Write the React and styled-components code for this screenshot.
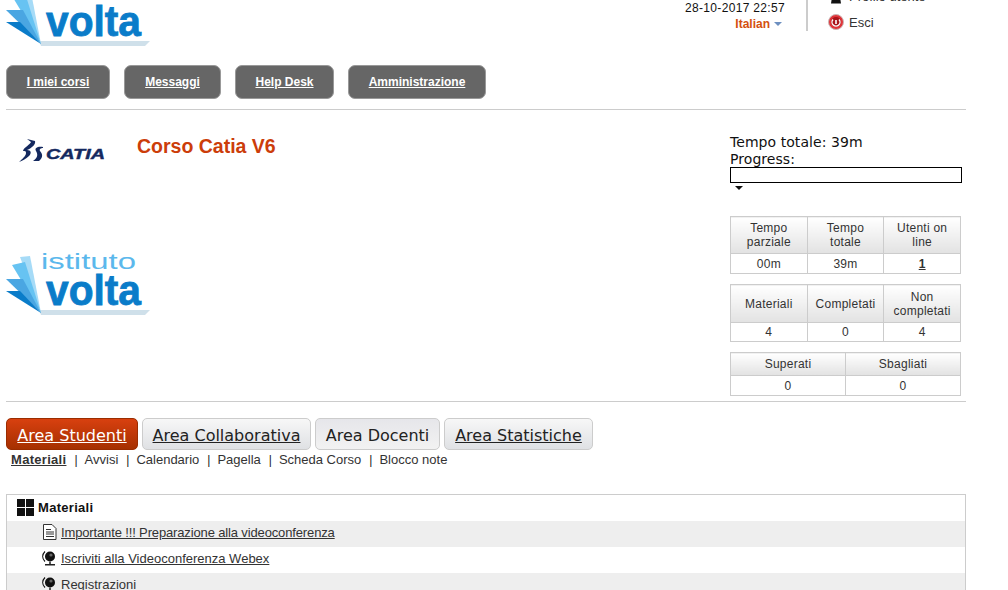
import React from "react";
import styled, { createGlobalStyle } from "styled-components";

const GlobalStyle = createGlobalStyle`
  html, body {
    margin: 0;
    height: 590px;
    overflow: hidden;
    background: #fff;
    font-family: "Liberation Sans", Arial, sans-serif;
  }
`;

const Page = styled.div`
  width: 960px;
  padding-left: 6px;
`;

// header, the page is scrolled so its top part is cut off
const Header = styled.header`
  height: 48px;
  overflow: hidden;
  display: flex;
  align-items: flex-end;
  justify-content: space-between;
`;

const TopRight = styled.div`
  display: flex;
  align-self: flex-start;
  height: 31px;
`;

const DateBox = styled.div`
  width: 100px;
  padding-top: 1px;
  text-align: right;
  white-space: nowrap;
  font-size: 12px;
  line-height: 14px;
  color: #111;
  letter-spacing: 0.33px;
`;

const Lang = styled.div`
  margin-top: 2px;
  padding-right: 3px;
  font-weight: bold;
  color: #d4500f;
  letter-spacing: 0;
  display: flex;
  justify-content: flex-end;
  align-items: center;
  gap: 4px;
`;

const Caret = styled.span`
  width: 0;
  height: 0;
  border-left: 4px solid transparent;
  border-right: 4px solid transparent;
  border-top: 4px solid ${(p) => p.$color};
`;

const UserLinks = styled.div`
  width: 138px;
  margin-left: 21px;
  padding-left: 20px;
  border-left: 2px solid #ccc;
  color: #333;
  font-size: 13px;
`;

const UserLink = styled.div`
  display: flex;
  align-items: center;
  gap: 5px;
  height: 16px;
  margin-top: ${(p) => p.$top}px;
`;

const NavBar = styled.nav`
  display: flex;
  gap: 14px;
  margin-top: 17px;
  padding-bottom: 10px;
  border-bottom: 1px solid #ccc;
`;

const NavButton = styled.a`
  box-sizing: border-box;
  height: 34px;
  width: ${(p) => p.$width}px;
  display: flex;
  align-items: center;
  justify-content: center;
  background: #666;
  border: 1px solid #999;
  border-radius: 7px;
  color: #fff;
  font-size: 12px;
  font-weight: bold;
  text-decoration: underline;
`;

const CourseSection = styled.section`
  display: flex;
  justify-content: space-between;
  height: 291px;
  border-bottom: 1px solid #ccc;
`;

const CourseLeft = styled.div`
  padding-top: 24px;
`;

const CourseHead = styled.div`
  display: flex;
  align-items: flex-start;
  gap: 31px;
  padding-left: 12px;
`;

const CourseTitle = styled.h1`
  margin: 0;
  font-size: 19.5px;
  line-height: 24px;
  color: #cc3d0a;
`;

const CourseLogoWrap = styled.div`
  margin-top: 89px;
`;

const Stats = styled.aside`
  width: 236px;
  padding-top: 24px;
`;

const Summary = styled.div`
  font-family: "DejaVu Sans", Verdana, sans-serif;
  font-size: 14px;
  line-height: 17px;
  color: #111;
  letter-spacing: 0.06px;
`;

const ProgressBar = styled.div`
  box-sizing: border-box;
  width: 232px;
  height: 16px;
  margin-top: -1px;
  border: 1px solid #000;
`;

const ProgressMark = styled.span`
  display: block;
  width: 0;
  height: 0;
  margin: 3px 0 26px 5px;
  border-left: 4px solid transparent;
  border-right: 4px solid transparent;
  border-top: 4px solid #111;
`;

const StatTable = styled.table`
  width: 231px;
  table-layout: fixed;
  border-collapse: collapse;
  margin-bottom: 10px;
  font-size: 12px;
  line-height: 14px;
  letter-spacing: 0.25px;
  color: #333;
  text-align: center;

  th, td {
    border: 1px solid #ccc;
    padding: 0;
    font-weight: normal;
  }

  th {
    height: ${(p) => p.$headHeight}px;
    background: linear-gradient(#fff, #e2e2e2);
  }

  td {
    height: ${(p) => p.$cellHeight}px;
  }
`;

const UserCount = styled.a`
  font-weight: bold;
  text-decoration: underline;
`;

const Tabs = styled.div`
  display: flex;
  gap: 4px;
  margin-top: 16px;
`;

const Tab = styled.a`
  box-sizing: border-box;
  width: ${(p) => p.$width}px;
  height: 32px;
  padding-top: 2px;
  display: flex;
  align-items: center;
  justify-content: center;
  border-radius: 5px;
  border: 1px solid ${(p) => (p.$active ? "#9a2c00" : "#ccc")};
  background: ${(p) =>
    p.$active
      ? "linear-gradient(#d8400f, #a53000)"
      : p.$flat
        ? "linear-gradient(#e6e6ea, #f2f2f2)"
        : "linear-gradient(#f7f7f7, #dfe1e4)"};
  color: ${(p) => (p.$active ? "#fff" : "#222")};
  font-family: "DejaVu Sans", Verdana, sans-serif;
  font-size: 16px;
  text-decoration: ${(p) => (p.$flat ? "none" : "underline")};
`;

const SubNav = styled.div`
  display: flex;
  align-items: center;
  margin-top: 2px;
  padding-left: 5px;
  font-size: 13px;
  line-height: 16px;
  color: #333;
`;

const SubLink = styled.a`
  font-weight: ${(p) => (p.$active ? "bold" : "normal")};
  letter-spacing: ${(p) => (p.$active ? "0.3px" : "0")};
  text-decoration: ${(p) => (p.$active ? "underline" : "none")};
`;

const Separator = styled.span`
  margin: 0 7px 0 8px;
  font-size: 12px;
  color: #222;
`;

const Panel = styled.section`
  margin-top: 26px;
  border: 1px solid #ccc;
  border-bottom: 0;
`;

const PanelTitle = styled.div`
  box-sizing: border-box;
  height: 26px;
  padding: 0 0 2px 10px;
  display: flex;
  align-items: center;
  gap: 4px;
  font-size: 13px;
  letter-spacing: 0.3px;
  font-weight: bold;
  color: #111;
`;

const MaterialRow = styled.div`
  box-sizing: border-box;
  height: 26px;
  padding: 0 0 4px 35px;
  display: flex;
  align-items: center;
  gap: 4px;
  font-size: 13px;
  color: #333;
  background: ${(p) => (p.$shaded ? "#eee" : "#fff")};
`;

const MaterialLink = styled.a`
  letter-spacing: ${(p) => (p.$tight ? "-0.14px" : "0")};
  text-decoration: ${(p) => (p.$plain ? "none" : "underline")};
`;

const IconBox = styled.svg`
  flex: none;
`;

const LogoSvg = styled.svg`
  display: block;
  flex: none;
`;

const Logo = () => (
  <LogoSvg width="146" height="66" viewBox="0 0 146 66">
    <polygon points="35,64 139,64 144,59 33,59" fill="#cfe0ea" />
    <polygon points="14,6 24,5 35,62" fill="#a6dbf7" />
    <polygon points="6,14 19,11 35,62" fill="#67c3f2" />
    <polygon points="0,28 17,28 35,62" fill="#4aa6e2" />
    <polygon points="0,40 14,40 35,62" fill="#0a7cc9" />
    <text
      x="35"
      y="18"
      fontFamily="Liberation Sans, sans-serif"
      fontSize="22"
      fill="#5bb8ec"
      textLength="95"
      lengthAdjust="spacingAndGlyphs"
    >
      istituto
    </text>
    <text
      x="40"
      y="54"
      fontFamily="Liberation Sans, sans-serif"
      fontSize="42"
      fontWeight="bold"
      fill="#0a7cc9"
      stroke="#0a7cc9"
      strokeWidth="0.8"
      textLength="95"
      lengthAdjust="spacingAndGlyphs"
    >
      volta
    </text>
  </LogoSvg>
);

const CatiaLogo = () => (
  <LogoSvg width="88" height="28" viewBox="0 0 88 28">
    <path
      d="M9 5 L17 7 C18 10 14 14 9 16 C13 16 14 19 11 22 C8 25 4 27 1 28 C4 25 8 22 8 19 C8 17 7 17 5 17 C6 13 12 11 13 8 Z"
      fill="#14295f"
    />
    <path d="M25 13 C20 12 16 14 18 17 C20 20 20 24 15 27 L21 27 C25 24 25 20 22 17 C21 15 23 14 25 14 Z" fill="#14295f" />
    <text
      x="28"
      y="25"
      fontFamily="Liberation Sans, sans-serif"
      fontSize="14"
      fontWeight="bold"
      fontStyle="italic"
      fill="#14295f"
      stroke="#14295f"
      strokeWidth="0.4"
      textLength="59"
      lengthAdjust="spacingAndGlyphs"
    >
      CATIA
    </text>
  </LogoSvg>
);

const PowerIcon = () => (
  <IconBox width="16" height="16" viewBox="0 0 16 16">
    <circle cx="8" cy="8" r="7.5" fill="#e0353a" stroke="#cbb5b5" />
    <circle cx="8" cy="8" r="5" fill="#a8141a" />
    <path d="M5 5.5 A4 4 0 1 0 11 5.5" fill="none" stroke="#fff" strokeWidth="1.4" />
    <rect x="7.2" y="6" width="1.6" height="4" fill="#fff" />
  </IconBox>
);

const UserIcon = () => (
  <IconBox width="16" height="16" viewBox="0 0 16 16">
    <circle cx="8" cy="4" r="3.5" fill="#111" />
    <path d="M3 15.5 L4 9 H12 L13 15.5 Z" fill="#111" />
  </IconBox>
);

const GridIcon = () => (
  <IconBox width="17" height="17" viewBox="0 0 17 17">
    <rect x="0" y="0" width="8" height="8" fill="#111" />
    <rect x="9" y="0" width="8" height="8" fill="#111" />
    <rect x="0" y="9" width="8" height="8" fill="#111" />
    <rect x="9" y="9" width="8" height="8" fill="#111" />
  </IconBox>
);

const DocIcon = () => (
  <IconBox width="15" height="16" viewBox="0 0 15 16">
    <path d="M1.5 .5 H10 L14 4.5 V15.5 H1.5 Z" fill="#fff" stroke="#333" />
    <path d="M4 5.5 H9 M4 8 H12 M4 10 H12 M4 12.5 H12" stroke="#333" />
  </IconBox>
);

const WebcamIcon = () => (
  <IconBox width="15" height="16" viewBox="0 0 15 16">
    <circle cx="8" cy="6.5" r="5" fill="#111" />
    <circle cx="9" cy="5" r="1.6" fill="#666" />
    <path d="M3 1.5 C0 4.5 0 8.5 3 11.5" fill="none" stroke="#111" strokeWidth="1.2" />
    <rect x="7" y="11.5" width="2" height="2.5" fill="#555" />
    <rect x="3" y="14" width="10" height="1.5" fill="#222" />
  </IconBox>
);

const navItems = [
  { label: "I miei corsi", width: 104 },
  { label: "Messaggi", width: 97 },
  { label: "Help Desk", width: 99 },
  { label: "Amministrazione", width: 138 },
];

const tabs = [
  { label: "Area Studenti", width: 132, active: true },
  { label: "Area Collaborativa", width: 169 },
  { label: "Area Docenti", width: 125, flat: true },
  { label: "Area Statistiche", width: 149 },
];

const subLinks = ["Avvisi", "Calendario", "Pagella", "Scheda Corso", "Blocco note"];

const App = () => {
  return (
    <>
      <GlobalStyle />
      <Page>
        <Header>
          <Logo />
          <TopRight>
            <DateBox>
              28-10-2017 22:57
              <Lang>
                Italian <Caret $color="#6d8fc0" />
              </Lang>
            </DateBox>
            <UserLinks>
              <UserLink $top={-12}>
                <UserIcon /> Profilo utente
              </UserLink>
              <UserLink $top={10}>
                <PowerIcon /> Esci
              </UserLink>
            </UserLinks>
          </TopRight>
        </Header>

        <NavBar>
          {navItems.map((item) => (
            <NavButton key={item.label} $width={item.width}>
              {item.label}
            </NavButton>
          ))}
        </NavBar>

        <CourseSection>
          <CourseLeft>
            <CourseHead>
              <CatiaLogo />
              <CourseTitle>Corso Catia V6</CourseTitle>
            </CourseHead>
            <CourseLogoWrap>
              <Logo />
            </CourseLogoWrap>
          </CourseLeft>

          <Stats>
            <Summary>
              Tempo totale: 39m
              <br />
              Progress:
            </Summary>
            <ProgressBar />
            <ProgressMark />

            <StatTable $headHeight={36} $cellHeight={19}>
              <thead>
                <tr>
                  <th>Tempo<br />parziale</th>
                  <th>Tempo<br />totale</th>
                  <th>Utenti on<br />line</th>
                </tr>
              </thead>
              <tbody>
                <tr>
                  <td>00m</td>
                  <td>39m</td>
                  <td>
                    <UserCount>1</UserCount>
                  </td>
                </tr>
              </tbody>
            </StatTable>

            <StatTable $headHeight={37} $cellHeight={18}>
              <thead>
                <tr>
                  <th>Materiali</th>
                  <th>Completati</th>
                  <th>Non<br />completati</th>
                </tr>
              </thead>
              <tbody>
                <tr>
                  <td>4</td>
                  <td>0</td>
                  <td>4</td>
                </tr>
              </tbody>
            </StatTable>

            <StatTable $headHeight={22} $cellHeight={19}>
              <thead>
                <tr>
                  <th>Superati</th>
                  <th>Sbagliati</th>
                </tr>
              </thead>
              <tbody>
                <tr>
                  <td>0</td>
                  <td>0</td>
                </tr>
              </tbody>
            </StatTable>
          </Stats>
        </CourseSection>

        <Tabs>
          {tabs.map((tab) => (
            <Tab key={tab.label} $width={tab.width} $active={tab.active} $flat={tab.flat}>
              {tab.label}
            </Tab>
          ))}
        </Tabs>

        <SubNav>
          <SubLink $active>Materiali</SubLink>
          {subLinks.map((label) => (
            <React.Fragment key={label}>
              <Separator>|</Separator>
              <SubLink>{label}</SubLink>
            </React.Fragment>
          ))}
        </SubNav>

        <Panel>
          <PanelTitle>
            <GridIcon /> Materiali
          </PanelTitle>
          <MaterialRow $shaded>
            <DocIcon />
            <MaterialLink $tight>Importante !!! Preparazione alla videoconferenza</MaterialLink>
          </MaterialRow>
          <MaterialRow>
            <WebcamIcon />
            <MaterialLink>Iscriviti alla Videoconferenza Webex</MaterialLink>
          </MaterialRow>
          <MaterialRow $shaded>
            <WebcamIcon />
            <MaterialLink $plain>Registrazioni</MaterialLink>
          </MaterialRow>
        </Panel>
      </Page>
    </>
  );
};

export default App;
